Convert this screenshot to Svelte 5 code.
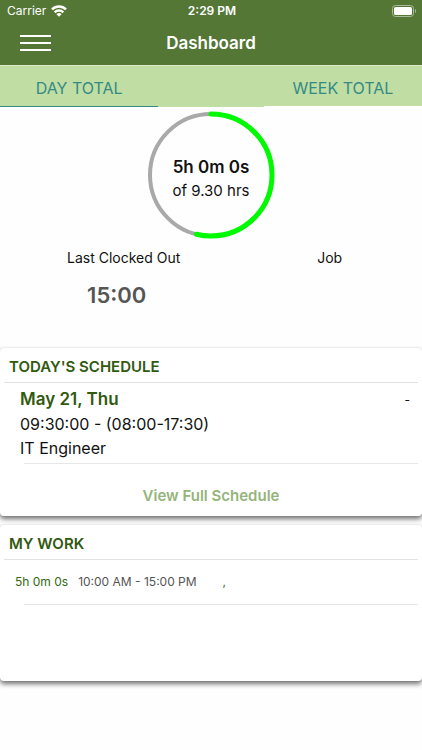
<script lang="ts">
	const day = { worked: '5h 0m 0s', workedHours: 5, targetHours: 9.3, lastOut: '15:00' };

	const tabs = [
		{ id: 'day', label: 'DAY TOTAL' },
		{ id: 'week', label: 'WEEK TOTAL' }
	];

	const shifts = [
		{ date: 'May 21, Thu', time: '09:30:00 - (08:00-17:30)', role: 'IT Engineer', note: '-' }
	];

	const entries = [{ total: '5h 0m 0s', range: '10:00 AM - 15:00 PM', place: ',' }];

	let activeTab = $state('day');

	const radius = 61;
	const circumference = 2 * Math.PI * radius;
	const worked = circumference * (day.workedHours / day.targetHours);
</script>

<div class="page">
	<header class="top">
		<div class="status">
			<span class="carrier">
				Carrier
				<svg width="16" height="12" viewBox="0 0 16 12" aria-hidden="true">
					<g fill="none" stroke="#fff" stroke-width="2.4">
						<path d="M1 4.4a9.9 9.9 0 0 1 14 0" />
						<path d="M3.7 7.3a6.1 6.1 0 0 1 8.6 0" />
					</g>
					<path d="M8 11.8 5.4 9.2a3.7 3.7 0 0 1 5.2 0z" fill="#fff" />
				</svg>
			</span>
			<span class="clock">2:29 PM</span>
			<svg class="battery" width="25" height="12" viewBox="0 0 25 12" aria-hidden="true">
				<rect x="0.5" y="0.5" width="21" height="11" rx="3" fill="none" stroke="#a9bb98" />
				<rect x="2" y="2" width="18" height="8" rx="1.6" fill="#fff" />
				<path d="M23 4v4c1.6-.7 1.6-3.3 0-4z" fill="#a9bb98" />
			</svg>
		</div>
		<div class="bar">
			<button type="button" class="menu" aria-label="Menu">
				<svg width="31" height="18" viewBox="0 0 31 18" aria-hidden="true">
					<path d="M0 2h31M0 9h31M0 16h31" stroke="#fff" stroke-width="2" />
				</svg>
			</button>
			<h1>Dashboard</h1>
		</div>
	</header>

	<nav class="tabs">
		{#each tabs as tab}
			<button
				type="button"
				class="tab"
				class:active={activeTab === tab.id}
				aria-pressed={activeTab === tab.id}
				onclick={() => (activeTab = tab.id)}
			>
				{tab.label}
			</button>
		{/each}
	</nav>

	<main>
		<section class="summary">
			<div class="ring">
				<svg viewBox="0 0 128 128" aria-hidden="true">
					<circle cx="64" cy="64" r={radius} fill="none" stroke="#a9a9a9" stroke-width="4" />
					<circle
						cx="64"
						cy="64"
						r={radius}
						fill="none"
						stroke="#00fa00"
						stroke-width="5"
						stroke-linecap="round"
						stroke-dasharray="{worked} {circumference}"
						transform="rotate(-90 64 64)"
					/>
				</svg>
				<div class="ring-text">
					<strong>{day.worked}</strong>
					<span>of {day.targetHours.toFixed(2)} hrs</span>
				</div>
			</div>
			<div class="stats">
				<div>
					<h3 class="out-label">Last Clocked Out</h3>
					<p class="out-time">{day.lastOut}</p>
				</div>
				<div>
					<h3>Job</h3>
				</div>
			</div>
		</section>

		<section class="card">
			<h2>TODAY'S SCHEDULE</h2>
			{#each shifts as shift}
				<article class="shift">
					<div class="shift-head">
						<h3>{shift.date}</h3>
						<span>{shift.note}</span>
					</div>
					<p>{shift.time}</p>
					<p>{shift.role}</p>
				</article>
			{/each}
			<button type="button" class="full">View Full Schedule</button>
		</section>

		<section class="card work">
			<h2>MY WORK</h2>
			{#each entries as entry}
				<div class="entry">
					<span class="entry-total">{entry.total}</span>
					<span class="entry-range">{entry.range}</span>
					<span>{entry.place}</span>
				</div>
			{/each}
		</section>
	</main>
</div>

<style>
	:global(body) {
		background: #fefefe;
	}

	.page {
		padding-bottom: 24px;
		font-family: Inter, 'Liberation Sans', sans-serif;
		color: #111;
	}

	h1,
	h2,
	h3,
	p {
		margin: 0;
	}

	button {
		padding: 0;
		border: 0;
		background: none;
		font-family: inherit;
		cursor: pointer;
	}

	svg {
		display: block;
	}

	.top {
		background: #547736;
		color: #fff;
		border-bottom: 1px solid #dcebcb;
	}

	.status {
		display: grid;
		grid-template-columns: 1fr auto 1fr;
		align-items: center;
		height: 21px;
		padding: 0 5px 0 7px;
		font-size: 12px;
	}

	.carrier {
		display: flex;
		align-items: center;
		gap: 5px;
	}

	.clock {
		font-weight: 600;
	}

	.battery {
		justify-self: end;
	}

	.bar {
		display: grid;
		grid-template-columns: 1fr auto 1fr;
		align-items: center;
		height: 44px;
		padding: 0 20px;
	}

	.menu {
		justify-self: start;
	}

	h1 {
		font-size: 17px;
		font-weight: 600;
	}

	.tabs {
		display: grid;
		grid-template-columns: 1fr 1fr;
		column-gap: 25%;
		background: #c0dda3;
	}

	.tab {
		height: 41px;
		padding-top: 3px;
		border-bottom: 1px solid #fff;
		color: #348b83;
		font-size: 16px;
	}

	.tab.active {
		border-bottom-color: #348b83;
	}

	.summary {
		min-height: 237px;
		padding-top: 4px;
	}

	.ring {
		display: grid;
		width: 128px;
		margin: 0 auto;
	}

	.ring > * {
		grid-area: 1 / 1;
	}

	.ring-text {
		display: flex;
		flex-direction: column;
		justify-content: center;
		align-items: center;
		padding-top: 7px;
		font-size: 15px;
		line-height: 24px;
	}

	.ring-text strong {
		font-size: 17px;
		font-weight: 600;
	}

	.stats {
		display: grid;
		grid-template-columns: 9fr 7fr;
		padding-top: 9px;
		text-align: center;
	}

	.stats h3 {
		font-size: 14px;
		font-weight: 400;
		line-height: 20px;
	}

	.stats .out-label {
		padding-left: 10px;
	}

	.out-time {
		padding: 12px 4px 0 0;
		color: #555;
		font-size: 22px;
		font-weight: 600;
		line-height: 30px;
	}

	.card {
		background: #fff;
		border-radius: 4px;
		box-shadow:
			0 3px 5px rgba(0, 0, 0, 0.55),
			0 0 2px rgba(0, 0, 0, 0.1);
	}

	.card h2 {
		margin: 0 4px;
		padding: 4px 5px 0;
		border-bottom: 1px solid #e2e2e6;
		color: #31590f;
		font-size: 15px;
		font-weight: 600;
		line-height: 30px;
	}

	.shift {
		position: relative;
		padding: 4px 12px 4px 20px;
	}

	.shift::after,
	.entry::after {
		content: '';
		position: absolute;
		right: 4px;
		bottom: 0;
		left: 24px;
		border-bottom: 1px solid #e6e6e9;
	}

	.shift-head {
		display: flex;
		justify-content: space-between;
		font-size: 12px;
		line-height: 25px;
	}

	.shift h3 {
		color: #31590f;
		font-size: 17px;
		font-weight: 600;
	}

	.shift p {
		font-size: 16px;
		line-height: 24px;
	}

	.full {
		display: block;
		width: 100%;
		height: 52px;
		padding-top: 10px;
		color: #94b47b;
		font-size: 15px;
		font-weight: 600;
	}

	.work {
		min-height: 156px;
		margin-top: 9px;
	}

	.entry {
		position: relative;
		display: flex;
		padding: 0 15px 2px;
		color: #555;
		font-size: 12px;
		line-height: 43px;
	}

	.entry-total {
		margin-right: 10px;
		color: #31690f;
	}

	.entry-range {
		margin-right: 26px;
	}
</style>
